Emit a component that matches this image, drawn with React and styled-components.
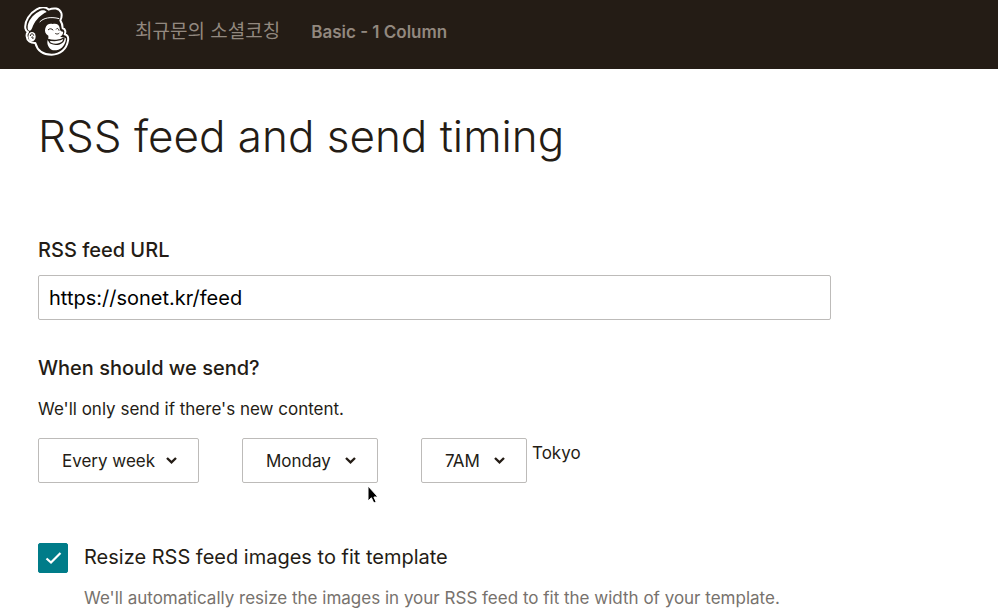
import { useState } from "react";
import styled, { createGlobalStyle, ThemeProvider } from "styled-components";

const theme = {
    bar: "#241c15",
    barText: "#92887f",
    text: "#241c15",
    muted: "#77726d",
    border: "#bdbbb9",
    accent: "#007c89",
};

const GlobalStyle = createGlobalStyle`
    * {
        box-sizing: border-box;
    }

    body {
        margin: 0;
        background-color: #ffffff;
        color: ${theme.text};
        font-family: Inter, "Noto Sans CJK KR", sans-serif;
        font-size: 17px;
        line-height: 24px;
    }
`;

const TopBar = styled.header`
    display: flex;
    align-items: center;
    height: 69px;
    padding: 0 24px 6px;
    background-color: ${({ theme }) => theme.bar};
`;

const LogoLink = styled.a`
    display: block;
    width: 46px;
    height: 50px;
    margin-right: 65px;

    > svg {
        display: block;
        width: 100%;
        height: 100%;
    }
`;

const Crumb = styled.a`
    margin-right: 31px;
    color: ${({ theme }) => theme.barText};
    font-size: ${({ $current }) => ($current ? "17px" : "19px")};
    font-weight: ${({ $current }) => ($current ? 600 : 400)};
    text-decoration: none;
    white-space: nowrap;
`;

const Content = styled.main`
    padding: 39px 38px 0;
`;

const Title = styled.h1`
    margin: 0 0 74px;
    font-size: 44px;
    font-weight: 300;
    line-height: 56px;
`;

const Form = styled.form`
    display: flex;
    flex-direction: column;
    max-width: 793px;
`;

const Label = styled.label`
    margin-bottom: 13px;
    font-size: 20px;
    font-weight: 500;
`;

const UrlInput = styled.input`
    width: 100%;
    height: 45px;
    margin-bottom: 36px;
    padding: 0 10px;
    border: 1px solid ${({ theme }) => theme.border};
    border-radius: 2px;
    outline: none;
    color: #000000;
    font: inherit;
    font-size: 20px;
`;

const Fieldset = styled.fieldset`
    margin: 0 0 60px;
    padding: 0;
    border: none;
`;

const Legend = styled.legend`
    margin-bottom: 17px;
    padding: 0;
    font-size: 20px;
    font-weight: 500;
`;

const Hint = styled.p`
    margin: 0;
`;

const SelectRow = styled.div`
    display: flex;
    gap: 43px;
    margin-top: 17px;
`;

const SelectBox = styled.div`
    position: relative;
    display: flex;
    width: ${({ $width }) => $width};
`;

const Select = styled.select`
    appearance: none;
    width: 100%;
    height: 45px;
    padding: 0 40px 0 23px;
    border: 1px solid ${({ theme }) => theme.border};
    border-radius: 2px;
    outline: none;
    background-color: #ffffff;
    color: inherit;
    font: inherit;
`;

const ChevronIcon = styled.svg`
    position: absolute;
    top: 18px;
    right: 21px;
    width: 13px;
    height: 9px;
    pointer-events: none;
`;

const PointerIcon = styled.svg`
    position: absolute;
    top: 47px;
    left: 125px;
    width: 12px;
    height: 19px;
    pointer-events: none;
`;

const TimeGroup = styled.div`
    display: flex;
    gap: 5px;
`;

const Zone = styled.span`
    padding-top: 3px;
`;

const CheckRow = styled.div`
    display: grid;
    grid-template-columns: 30px 1fr;
    column-gap: 16px;
    row-gap: 13px;
`;

const CheckBox = styled.span`
    position: relative;
    display: block;
    width: 30px;
    height: 30px;
`;

const CheckInput = styled.input`
    appearance: none;
    display: block;
    width: 30px;
    height: 30px;
    margin: 0;
    border: 1px solid ${({ theme }) => theme.accent};
    border-radius: 2px;
    background-color: #ffffff;

    &:checked {
        background-color: ${({ theme }) => theme.accent};
    }
`;

const CheckIcon = styled.svg`
    position: absolute;
    top: 8px;
    left: 7px;
    width: 17px;
    height: 14px;
    pointer-events: none;
`;

const CheckLabel = styled.label`
    padding-top: 2px;
    font-size: 20px;
`;

const CheckHint = styled(Hint)`
    grid-column: 2;
    color: ${({ theme }) => theme.muted};
`;

const Chevron = () => (
    <ChevronIcon viewBox="0 0 13 9" fill="none" aria-hidden="true">
        <path d="M2 2l4.5 4.3L11 2" stroke="#241c15" strokeWidth="2.4" />
    </ChevronIcon>
);

const MonkeyLogo = () => (
    <svg viewBox="0 0 138 150" aria-hidden="true">
        <path
            d="M4 64C1 42 18 18 38 7C52 -1 66 0 74 8C88 2 106 2 112 18C115 29 111 36 109 40C113 46 116 54 116 64C124 66 126 74 122 82C130 84 134 91 132 101C128 126 109 143 83 143C58 143 40 131 34 108C20 109 9 101 8 88C7 83 9 78 12 75C7 73 5 70 4 64Z"
            fill="#241c15"
            stroke="#fff"
            strokeWidth="6"
            strokeLinejoin="round"
        />
        <path
            d="M11 62C10 44 26 23 44 14C54 8 64 9 68 15C50 23 36 38 27 56C24 66 20 72 16 71C13 70 11 67 11 62Z"
            fill="#fff"
        />
        <path
            d="M47 45C58 33 79 28 106 35"
            fill="none"
            stroke="#fff"
            strokeWidth="3"
        />
        <path
            d="M64 64C67 51 78 48 86 51C96 48 106 52 107 63C107 70 111 74 117 74C119 80 113 87 108 89C119 91 124 91 126 95C124 118 108 130 91 130C79 129 71 119 70 107C69 99 75 94 73 86C64 81 61 73 64 64Z"
            fill="#fff"
        />
        <path
            d="M73 68C77 64 83 64 87 69M97 66C100 62 104 65 105 70M95 80C99 82 103 81 105 79"
            fill="none"
            stroke="#241c15"
            strokeWidth="3"
            strokeLinecap="round"
        />
        <path
            d="M72 97C87 103 107 101 120 93C120 110 98 117 79 108Z"
            fill="#fff"
            stroke="#241c15"
            strokeWidth="4"
            strokeLinejoin="round"
        />
        <ellipse cx="24" cy="89" rx="11" ry="14" fill="#fff" />
        <path
            d="M19 87C19 78 29 79 29 86M22 91C27 88 29 92 26 96"
            fill="none"
            stroke="#241c15"
            strokeWidth="3"
        />
    </svg>
);

const SelectField = ({ label, width, options, initial, children }) => {
    const [value, setValue] = useState(initial);

    return (
        <SelectBox $width={width}>
            <Select
                aria-label={label}
                value={value}
                onChange={(e) => setValue(e.target.value)}
            >
                {options.map((option) => (
                    <option key={option}>{option}</option>
                ))}
            </Select>
            <Chevron />
            {children}
        </SelectBox>
    );
};

const periods = ["Every day", "Every week", "Every month"];
const days = [
    "Sunday",
    "Monday",
    "Tuesday",
    "Wednesday",
    "Thursday",
    "Friday",
    "Saturday",
];
const hours = ["6AM", "7AM", "8AM", "9AM"];

const App = () => {
    const [url, setUrl] = useState("https://sonet.kr/feed");
    const [resize, setResize] = useState(true);

    return (
        <ThemeProvider theme={theme}>
            <GlobalStyle />
            <TopBar>
                <LogoLink href="#" aria-label="Mailchimp">
                    <MonkeyLogo />
                </LogoLink>
                <Crumb href="#">최규문의 소셜코칭</Crumb>
                <Crumb href="#" $current>
                    Basic - 1 Column
                </Crumb>
            </TopBar>
            <Content>
                <Title>RSS feed and send timing</Title>
                <Form>
                    <Label htmlFor="feed-url">RSS feed URL</Label>
                    <UrlInput
                        id="feed-url"
                        type="text"
                        value={url}
                        onChange={(e) => setUrl(e.target.value)}
                    />
                    <Fieldset>
                        <Legend>When should we send?</Legend>
                        <Hint>We'll only send if there's new content.</Hint>
                        <SelectRow>
                            <SelectField
                                label="Frequency"
                                width="161px"
                                options={periods}
                                initial="Every week"
                            />
                            <SelectField
                                label="Day"
                                width="136px"
                                options={days}
                                initial="Monday"
                            >
                                <PointerIcon
                                    viewBox="0 0 12 19"
                                    aria-hidden="true"
                                >
                                    <path
                                        d="M1 1v15l3.4-3.2L6.8 18l2.4-1-2.3-5H11z"
                                        fill="#000"
                                        stroke="#fff"
                                        strokeWidth="1"
                                    />
                                </PointerIcon>
                            </SelectField>
                            <TimeGroup>
                                <SelectField
                                    label="Time"
                                    width="106px"
                                    options={hours}
                                    initial="7AM"
                                />
                                <Zone>Tokyo</Zone>
                            </TimeGroup>
                        </SelectRow>
                    </Fieldset>
                    <CheckRow>
                        <CheckBox>
                            <CheckInput
                                id="resize"
                                type="checkbox"
                                checked={resize}
                                onChange={(e) => setResize(e.target.checked)}
                            />
                            {resize && (
                                <CheckIcon
                                    viewBox="0 0 17 14"
                                    fill="none"
                                    aria-hidden="true"
                                >
                                    <path
                                        d="M1.5 7.5l4.5 4L15.5 2"
                                        stroke="#fff"
                                        strokeWidth="2.2"
                                    />
                                </CheckIcon>
                            )}
                        </CheckBox>
                        <CheckLabel htmlFor="resize">
                            Resize RSS feed images to fit template
                        </CheckLabel>
                        <CheckHint>
                            We'll automatically resize the images in your RSS
                            feed to fit the width of your template.
                        </CheckHint>
                    </CheckRow>
                </Form>
            </Content>
        </ThemeProvider>
    );
};

export default App;
